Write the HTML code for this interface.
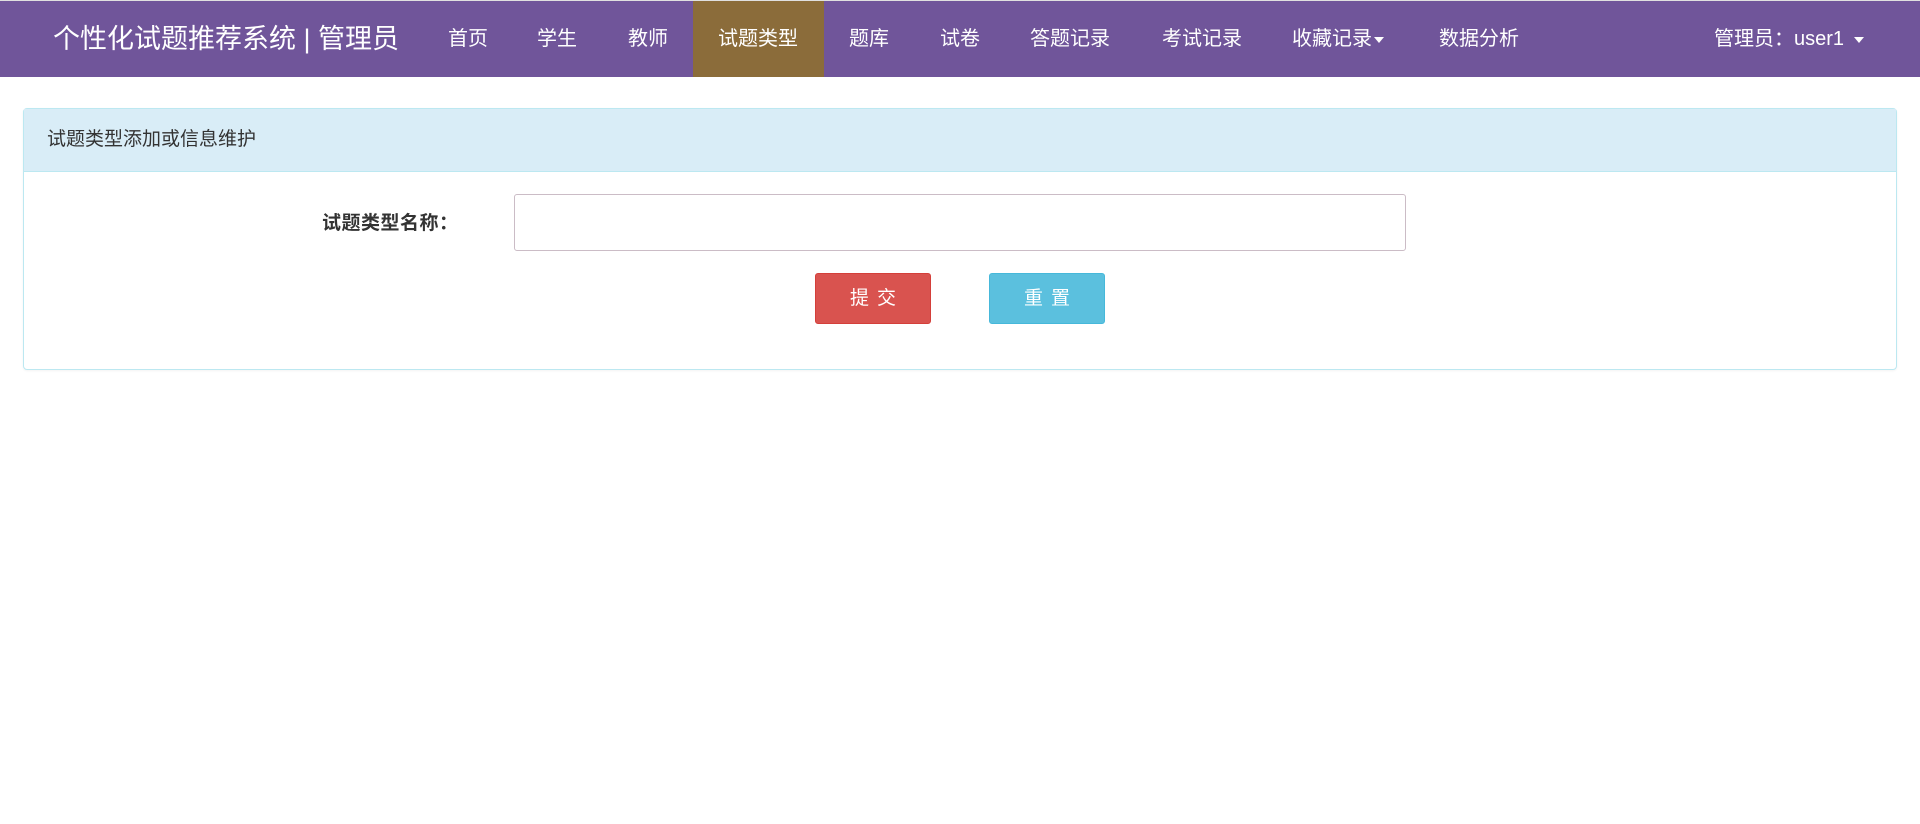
<!DOCTYPE html>
<html><head><meta charset="utf-8"><style>
*{box-sizing:border-box;margin:0;padding:0}
body{width:1920px;height:824px;background:#fff;font-family:"Liberation Sans","Noto Sans CJK SC",sans-serif;position:relative;overflow:hidden}
.nav{position:absolute;left:0;top:0;width:1920px;height:77px;background:#70559a;border-top:1px solid #e0e0e0}
.brand{position:absolute;left:53px;top:0;line-height:76px;font-size:27px;color:#fff}
.item{position:absolute;top:0;height:76px;line-height:76px;font-size:20px;color:#fff;padding:0 25px;white-space:nowrap}
.active{background:#8b6c3a}
.caret{display:inline-block;width:0;height:0;border-left:5px solid transparent;border-right:5px solid transparent;border-top:6px solid #fff;vertical-align:middle;margin-left:3px}
.panel{position:absolute;left:23px;top:108px;width:1874px;height:262px;border:1px solid #bce8f1;border-radius:4px;box-shadow:0 1px 2px rgba(0,0,0,.05)}
.ph{height:63px;background:#d9edf7;border-bottom:1px solid #bce8f1;font-size:19px;color:#333;line-height:62px;padding-left:23px}
.label{position:absolute;left:322px;top:208px;font-size:19px;font-weight:bold;color:#333;letter-spacing:0.5px}
.input{position:absolute;left:514px;top:194px;width:892px;height:57px;border:1px solid #cbbcc6;border-radius:3px}
.btn{position:absolute;top:273px;width:116px;height:51px;border-radius:3px;color:#fff;font-size:19px;text-align:center;line-height:50px;letter-spacing:8px;text-indent:8px}
</style></head><body>
<div class="nav">
<div class="brand">个性化试题推荐系统 | 管理员</div>
<div class="item" style="left:423px">首页</div>
<div class="item" style="left:512px">学生</div>
<div class="item" style="left:603px">教师</div>
<div class="item active" style="left:693px;width:131px">试题类型</div>
<div class="item" style="left:824px">题库</div>
<div class="item" style="left:915px">试卷</div>
<div class="item" style="left:1005px">答题记录</div>
<div class="item" style="left:1137px">考试记录</div>
<div class="item" style="left:1267px">收藏记录<span class="caret" style="margin-left:2px"></span></div>
<div class="item" style="left:1414px">数据分析</div>
<div class="item" style="left:1689px">管理员：user1 <span class="caret" style="margin-left:4px"></span></div>
</div>
<div class="panel"><div class="ph">试题类型添加或信息维护</div></div>
<div class="label">试题类型名称：</div>
<div class="input"></div>
<div class="btn" style="left:815px;background:#d9534f;border:1px solid #d43f3a">提交</div>
<div class="btn" style="left:989px;background:#5bc0de;border:1px solid #46b8da">重置</div>
</body></html>
